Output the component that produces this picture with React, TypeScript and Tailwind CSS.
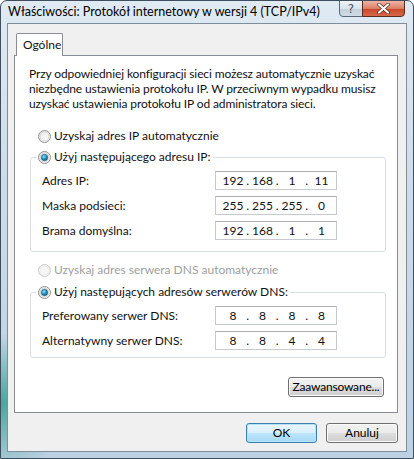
import React from "react";

function Radio({ checked = false, disabled = false }: { checked?: boolean; disabled?: boolean }) {
  return (
    <svg width="13" height="13" viewBox="0 0 13 13" className="shrink-0">
      <defs>
        <linearGradient id={disabled ? "rgd" : "rg"} x1="0" y1="0" x2="1" y2="1">
          <stop offset="0" stopColor={disabled ? "#f4f4f4" : "#e8e8e8"} />
          <stop offset="1" stopColor={disabled ? "#f8f8f8" : "#ffffff"} />
        </linearGradient>
        <radialGradient id="dot" cx="0.4" cy="0.35" r="0.7">
          <stop offset="0" stopColor="#8fe0f5" />
          <stop offset="0.5" stopColor="#2a9ac2" />
          <stop offset="1" stopColor="#0e4f78" />
        </radialGradient>
      </defs>
      <circle cx="6.5" cy="6.5" r="6" fill={`url(#${disabled ? "rgd" : "rg"})`} stroke={disabled ? "#c9c9c9" : "#8e8f8f"} strokeWidth="1" />
      <circle cx="6.5" cy="6.5" r="4.5" fill="none" stroke={disabled ? "#ececec" : "#d4d4d4"} strokeWidth="1" />
      {checked && <circle cx="6.5" cy="6.5" r="3.2" fill="url(#dot)" stroke="#1c5a80" strokeWidth="0.6" />}
    </svg>
  );
}

function IpBox({ octets }: { octets: string[] }) {
  return (
    <div className="w-[122px] h-[19px] flex items-center pl-[6px] border border-[#c6cad0] border-t-[#abadb3] bg-white text-[12px] leading-none">
      {octets.map((o, i) => (
        <React.Fragment key={i}>
          <span className="w-[22px] text-center">{o}</span>
          {i < 3 && <span className="w-[7.5px] text-center">.</span>}
        </React.Fragment>
      ))}
    </div>
  );
}

function Row({ label, octets }: { label: string; octets: string[] }) {
  return (
    <div className="flex items-center justify-between">
      <span>{label}</span>
      <IpBox octets={octets} />
    </div>
  );
}

function Btn({ children, def = false, className = "" }: { children: React.ReactNode; def?: boolean; className?: string }) {
  return (
    <button
      className={`h-[20px] flex items-center justify-center rounded-[3px] border text-[12px] leading-none text-black whitespace-nowrap ${
        def
          ? "border-[#3c7fb1] bg-[linear-gradient(180deg,#eaf6fd_0%,#d9f0fc_50%,#bee6fd_51%,#a7d9f5_100%)] shadow-[inset_0_0_0_1px_#b4e2f9]"
          : "border-[#707070] bg-[linear-gradient(180deg,#f2f2f2_0%,#ebebeb_50%,#dddddd_51%,#cfcfcf_100%)] shadow-[inset_0_0_0_1px_#fbfbfb]"
      } ${className}`}
    >
      {children}
    </button>
  );
}

export default function App() {
  return (
    <div className="w-[414px] h-[459px] flex flex-col rounded-t-[7px] border border-[#3e4e5e] bg-[radial-gradient(circle_at_0%_88%,#4aa59c_0px,rgba(74,165,156,0)_70px),linear-gradient(180deg,#e0eaf3_0%,#cddcea_40%,#bcd1e2_100%)] font-['Lato','Noto_Sans',sans-serif] text-[12px] text-[#111] overflow-hidden whitespace-nowrap">
      {/* Title bar */}
      <div className="h-[22px] flex items-start justify-between pl-[7px] pr-[8px]">
        <span className="mt-[4px] leading-[14px] text-[12.5px] text-black">
          Właściwości: Protokół internetowy w wersji 4 (TCP/IPv4)
        </span>
        <div className="flex -mt-px">
          <div className="w-[24px] h-[17px] rounded-bl-[4px] border border-[#5a6878] bg-[linear-gradient(180deg,#eef3f8_0%,#d9e3ec_50%,#c3d0dc_51%,#cfdbe6_100%)] flex items-center justify-center text-[12px] leading-none text-[#4a5566] font-['DejaVu_Sans',sans-serif]">
            ?
          </div>
          <div className="w-[43px] h-[17px] -ml-px rounded-br-[4px] border border-[#5a2a20] bg-[linear-gradient(180deg,#eeb4a4_0%,#dd7f68_50%,#c8442a_51%,#d56a4a_100%)] flex items-center justify-center">
            <svg width="13" height="11" viewBox="0 0 13 11">
              <path d="M2 1.5 L11 9.5 M11 1.5 L2 9.5" stroke="#5a2318" strokeWidth="3.6" strokeLinecap="round" />
              <path d="M2 1.5 L11 9.5 M11 1.5 L2 9.5" stroke="#ffffff" strokeWidth="2.2" strokeLinecap="round" />
            </svg>
          </div>
        </div>
      </div>

      {/* Client area */}
      <div className="mx-[6px] mb-[6px] flex-1 border border-[#7f8e9d] bg-[#f0f0f0] flex flex-col pl-[6px] pr-[8px] pt-[9px]">
        {/* Tab */}
        <div className="flex">
          <div className="ml-[2px] w-[47px] h-[23px] -mb-px relative z-10 border border-b-0 border-[#898c95] rounded-t-[2px] bg-white pl-[6px] pt-[3px] leading-[15px]">
            Ogólne
          </div>
        </div>
        {/* Panel */}
        <div className="h-[358px] border border-[#898c95] bg-white flex flex-col">
          <p className="pl-[14px] pt-[10px] leading-[15px] tracking-[-0.12px]">
            Przy odpowiedniej konfiguracji sieci możesz automatycznie uzyskać
            <br />
            niezbędne ustawienia protokołu IP. W przeciwnym wypadku musisz
            <br />
            uzyskać ustawienia protokołu IP od administratora sieci.
          </p>

          <div className="mt-[17px] ml-[23px] h-[16px] flex items-center gap-[3px]">
            <Radio />
            <span>Uzyskaj adres IP automatycznie</span>
          </div>

          <fieldset className="mt-[5px] ml-[15px] mr-[11px] border border-[#d5dfe5] rounded-[3px] pl-[11px] pr-[48px] pb-[11px]">
            <legend className="ml-[-6px] px-[2px]">
              <div className="h-[16px] flex items-center gap-[3px]">
                <Radio checked />
                <span>Użyj następującego adresu IP:</span>
              </div>
            </legend>
            <div className="mt-[6px] flex flex-col gap-[6px]">
              <Row label="Adres IP:" octets={["192", "168", "1", "11"]} />
              <Row label="Maska podsieci:" octets={["255", "255", "255", "0"]} />
              <Row label="Brama domyślna:" octets={["192", "168", "1", "1"]} />
            </div>
          </fieldset>

          <div className="mt-[10px] ml-[23px] h-[16px] flex items-center gap-[3px] text-[#a0a0a0]">
            <Radio disabled />
            <span>Uzyskaj adres serwera DNS automatycznie</span>
          </div>

          <fieldset className="mt-[6px] ml-[15px] mr-[11px] border border-[#d5dfe5] rounded-[3px] pl-[11px] pr-[48px] pb-[7px]">
            <legend className="ml-[-6px] px-[2px]">
              <div className="h-[16px] flex items-center gap-[3px]">
                <Radio checked />
                <span>Użyj następujących adresów serwerów DNS:</span>
              </div>
            </legend>
            <div className="mt-[6px] flex flex-col gap-[6px]">
              <Row label="Preferowany serwer DNS:" octets={["8", "8", "8", "8"]} />
              <Row label="Alternatywny serwer DNS:" octets={["8", "8", "4", "4"]} />
            </div>
          </fieldset>

          <div className="mt-[19px] mr-[13px] flex justify-end">
            <Btn className="w-[96px] tracking-[-0.2px]">Zaawansowane...</Btn>
          </div>
        </div>

        {/* Bottom buttons */}
        <div className="mt-[10px] flex justify-end gap-[9px]">
          <Btn def className="w-[71px]">OK</Btn>
          <Btn className="w-[72px]">Anuluj</Btn>
        </div>
      </div>
    </div>
  );
}
